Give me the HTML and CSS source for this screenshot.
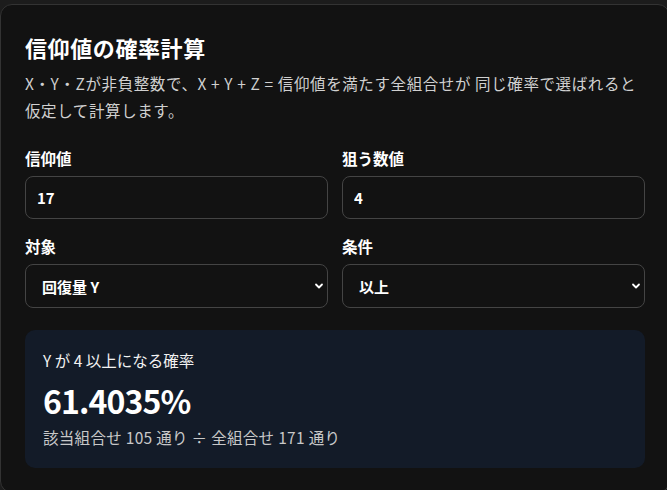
FILE: index.html
```html
<!DOCTYPE html>
<html lang="ja">
    <head>
        <meta charset="utf-8">
        <title>信仰値の確率計算</title>
        <link rel="stylesheet" href="styles.css">
    </head>
    <body>
        <div class="card">
            <h1 class="title">信仰値の確率計算</h1>
            <p class="desc">X・Y・Zが非負整数で、X + Y + Z = 信仰値を満たす全組合せが 同じ確率で選ばれると<br>仮定して計算します。</p>

            <div class="grid">
                <div class="field">
                    <label for="faith">信仰値</label>
                    <input type="text" id="faith" class="txt" value="17">
                </div>
                <div class="field">
                    <label for="target">狙う数値</label>
                    <input type="text" id="target" class="txt" value="4">
                </div>
                <div class="field">
                    <label for="axis">対象</label>
                    <div class="sel">
                        <select id="axis">
                            <option>回復量 Y</option>
                        </select>
                        <svg class="chev" width="10" height="10" viewBox="0 0 10 10"><path d="M2 3.5 L5 6.5 L8 3.5" fill="none" stroke="#fff" stroke-width="1.8" stroke-linecap="round" stroke-linejoin="round"/></svg>
                    </div>
                </div>
                <div class="field">
                    <label for="cond">条件</label>
                    <div class="sel">
                        <select id="cond">
                            <option>以上</option>
                        </select>
                        <svg class="chev" width="10" height="10" viewBox="0 0 10 10"><path d="M2 3.5 L5 6.5 L8 3.5" fill="none" stroke="#fff" stroke-width="1.8" stroke-linecap="round" stroke-linejoin="round"/></svg>
                    </div>
                </div>
            </div>

            <div class="result">
                <div class="r-label">Y が 4 以上になる確率</div>
                <div class="r-value">61.4035%</div>
                <div class="r-sub">該当組合せ 105 通り ÷ 全組合せ 171 通り</div>
            </div>
        </div>
    </body>
</html>
```

FILE: styles.css
```css
html, body {
    margin: 0;
    background-color: #1c1c1c;
    overflow: hidden;
}
body {
    padding-top: 4px;
    font-family: "Noto Sans CJK JP", "Noto Sans", sans-serif;
    color: #fff;
}
.card {
    width: 620px;
    background-color: #121212;
    border: 1px solid #333;
    border-radius: 12px;
    padding: 26px 24px 24px 24px;
}
.title {
    margin: 0;
    font-size: 22px;
    font-weight: bold;
    line-height: 32px;
    letter-spacing: 0.6px;
}
.desc {
    margin: 7px 0 0 0;
    font-size: 15.5px;
    line-height: 27px;
    color: #d0d0d0;
    white-space: nowrap;
    letter-spacing: 0.6px;
}
.grid {
    margin-top: 24px;
    display: grid;
    grid-template-columns: 1fr 1fr;
    column-gap: 14px;
    row-gap: 17px;
}
.field label {
    display: block;
    font-size: 15.5px;
    font-weight: bold;
    line-height: 20px;
    margin-bottom: 8px;
}
.txt, .sel select {
    box-sizing: border-box;
    width: 100%;
    background-color: #121212;
    border: 1px solid #444;
    border-radius: 8px;
    color: #fff;
    font-family: inherit;
    font-size: 15px;
    font-weight: bold;
    outline: none;
}
.txt {
    height: 43px;
    padding: 0 11px;
}
.sel {
    position: relative;
}
.sel select {
    height: 44px;
    padding: 0 16px;
    appearance: none;
    -webkit-appearance: none;
}
.chev {
    position: absolute;
    right: 4px;
    top: 17px;
    pointer-events: none;
}
.result {
    margin-top: 22px;
    background-color: #131b28;
    border-radius: 10px;
    padding: 19px 18px 20px 18px;
}
.r-label {
    font-size: 15.5px;
    line-height: 22px;
    color: #f2f2f2;
}
.r-value {
    margin-top: 9px;
    font-size: 32px;
    font-weight: bold;
    line-height: 40px;
    letter-spacing: -0.9px;
}
.r-sub {
    margin-top: 6px;
    font-size: 15.5px;
    line-height: 22px;
    color: #c8c8c8;
    letter-spacing: 0.3px;
}
```
